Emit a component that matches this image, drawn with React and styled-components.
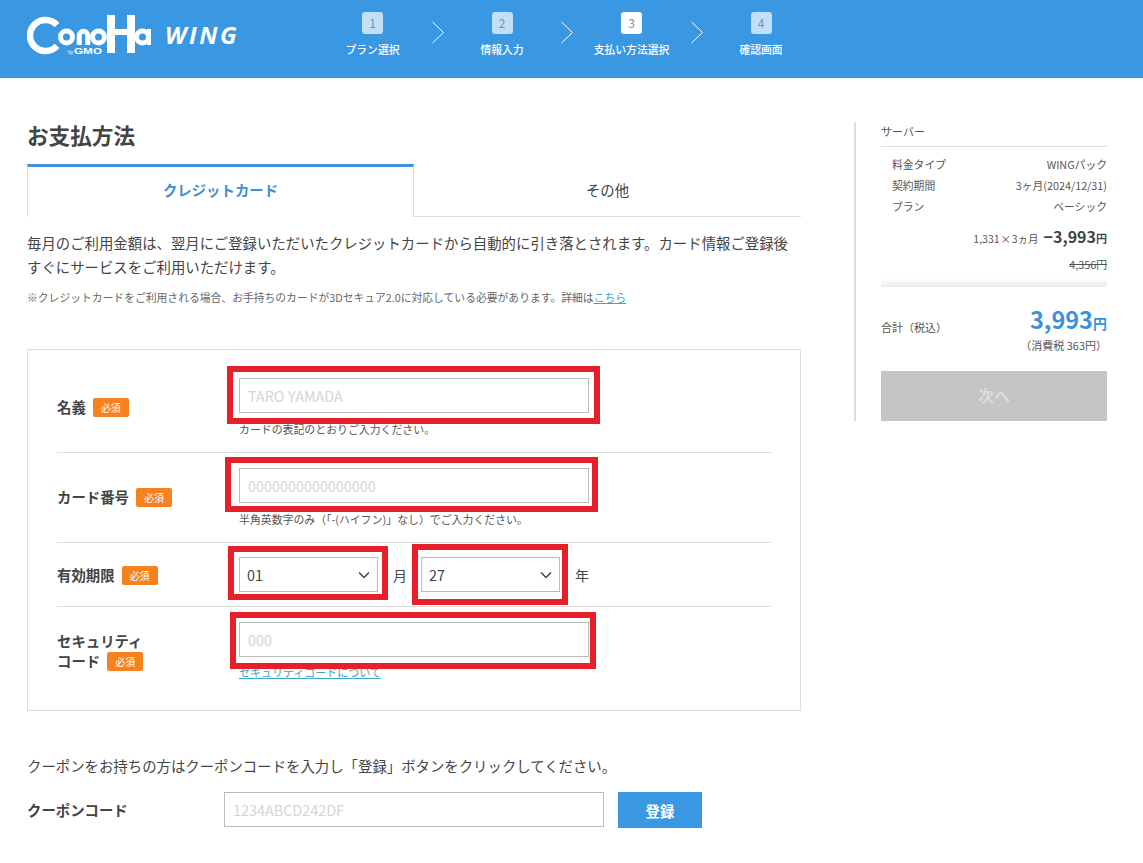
import React from 'react';
import styled, { createGlobalStyle } from 'styled-components';

const Global = createGlobalStyle`
  * { box-sizing: border-box; }
  html, body { margin: 0; padding: 0; background: #fff; }
  body {
    font-family: "Noto Sans CJK JP", "Noto Sans", sans-serif;
    color: #444;
    overflow: hidden;
  }
`;

const Page = styled.div`
  width: 1143px;
  height: 863px;
  overflow: hidden;
`;

const Header = styled.header`
  height: 78px;
  background: #3a97e1;
  display: flex;
  padding-left: 27px;
`;

const Brand = styled.div`
  width: 293.5px;
  display: flex;
  align-items: flex-start;
  padding-top: 15px;
`;

const LogoMark = styled.svg`
  width: 124px;
  height: 40px;
  flex: none;
`;

const BrandName = styled.span`
  margin: 4px 0 0 14px;
  font-family: "Open Sans", sans-serif;
  font-size: 24px;
  line-height: 32px;
  font-weight: 700;
  font-style: italic;
  letter-spacing: 2.6px;
  color: #fff;
`;

const Steps = styled.ol`
  display: flex;
  list-style: none;
  margin: 0;
  padding: 12px 0 0;
`;

const Step = styled.li`
  width: 104px;
  display: flex;
  flex-direction: column;
  align-items: center;
`;

const StepNum = styled.span`
  width: 21px;
  height: 22px;
  border-radius: 3px;
  background: ${(p) => (p.$active ? '#fff' : '#c3dff6')};
  color: #6b94c8;
  font-size: 12px;
  line-height: 22px;
  text-align: center;
`;

const StepLabel = styled.span`
  margin-top: 7px;
  font-size: 10.8px;
  line-height: 16px;
  font-weight: 500;
  color: #fff;
  white-space: nowrap;
`;

const StepArrow = styled.svg`
  width: 25.5px;
  height: 24px;
  margin-top: 9px;
  flex: none;
`;

const Body = styled.div`
  display: flex;
  padding: 44px 0 0 27px;
`;

const Main = styled.main`
  width: 774px;
  flex: none;
`;

const Title = styled.h1`
  margin: 0;
  height: 42px;
  font-size: 21.6px;
  line-height: 26px;
  font-weight: 700;
  color: #444;
`;

const Tabs = styled.div`
  display: flex;
`;

const Tab = styled.div`
  width: 387px;
  height: 53px;
  padding-bottom: 5px;
  display: flex;
  align-items: center;
  justify-content: center;
  font-size: 14.4px;
  font-weight: ${(p) => (p.$active ? 700 : 400)};
  color: ${(p) => (p.$active ? '#3f8fd2' : '#444')};
  border-top: 3px solid ${(p) => (p.$active ? '#3f92d8' : 'transparent')};
  border-left: ${(p) => (p.$active ? '1px solid #ddd' : '0')};
  border-right: ${(p) => (p.$active ? '1px solid #ddd' : '0')};
  border-bottom: ${(p) => (p.$active ? '0' : '1px solid #ddd')};
`;

const Lead = styled.p`
  margin: 14px 0 0;
  font-size: 14.4px;
  line-height: 24px;
  color: #444;
  white-space: nowrap;
`;

const Note = styled.p`
  margin: 9px 0 0;
  font-size: 10.8px;
  line-height: 18px;
  color: #666;
`;

const TextLink = styled.a`
  color: #3aa3c8;
  text-decoration: underline;
`;

const FormBox = styled.section`
  margin-top: 43px;
  height: 362px;
  border: 1px solid #ddd;
  padding: 12px 29px 0;
`;

const Row = styled.div`
  display: grid;
  grid-template-columns: 182px 1fr;
  align-items: center;
  padding: ${(p) => p.$pad || '16px 0'};
  border-bottom: ${(p) => (p.$last ? '0' : '1px solid #ddd')};
`;

const RowLabel = styled.div`
  font-size: 14.4px;
  line-height: 20px;
  font-weight: 700;
  color: #444;
`;

const Badge = styled.span`
  display: inline-block;
  width: 36px;
  height: 19px;
  margin-left: 7px;
  border-radius: 2px;
  background: #f8811f;
  color: #fff;
  font-size: 10px;
  line-height: 19px;
  font-weight: 400;
  text-align: center;
  vertical-align: 1px;
`;

const Field = styled.div`
  position: relative;
  width: ${(p) => p.$width || '350px'};
`;

const TextInput = styled.input`
  display: block;
  width: 100%;
  height: 35px;
  padding: 0 8px;
  border: 1px solid #bbb;
  border-radius: 0;
  outline: none;
  background: #fff;
  font-family: inherit;
  font-size: 14.4px;
  color: #444;
  &::placeholder {
    color: #d4d4d4;
    opacity: 1;
  }
`;

const Hint = styled.p`
  margin: 9px 0 0;
  font-size: 10.9px;
  line-height: 14px;
  color: #555;
  white-space: nowrap;
`;

const HintLink = styled(TextLink)`
  display: block;
  margin-top: 7px;
  font-size: 11px;
  line-height: 16px;
`;

const DateRow = styled.div`
  display: flex;
  align-items: center;
`;

const SelectInput = styled.select`
  display: block;
  width: 100%;
  height: 35px;
  padding: 0 7px;
  appearance: none;
  border: 1px solid #bbb;
  border-radius: 0;
  outline: none;
  background: #fff;
  font-family: inherit;
  font-size: 14.4px;
  color: #444;
`;

const Caret = styled.svg`
  position: absolute;
  right: 8px;
  top: 14px;
  width: 12px;
  height: 8px;
  pointer-events: none;
`;

const DateUnit = styled.span`
  width: 43px;
  padding-left: 15px;
  font-size: 14px;
  line-height: 20px;
  color: #444;
`;

/* Red annotation frames painted over the form fields */
const Mark = styled.div`
  position: absolute;
  top: ${(p) => p.$t}px;
  left: ${(p) => p.$l}px;
  width: ${(p) => p.$w}px;
  height: ${(p) => p.$h}px;
  border: 6px solid #e71f2b;
  pointer-events: none;
`;

const CouponText = styled.p`
  margin: 43px 0 0;
  font-size: 14.4px;
  line-height: 24px;
  color: #444;
`;

const CouponRow = styled.div`
  display: flex;
  align-items: flex-start;
  margin-top: 14px;
`;

const CouponLabel = styled.div`
  width: 197px;
  font-size: 14.4px;
  line-height: 35px;
  font-weight: 700;
  color: #444;
`;

const CouponInput = styled(TextInput)`
  width: 380px;
`;

const CouponButton = styled.button`
  width: 84px;
  height: 36px;
  margin-left: 14px;
  border: 0;
  background: #3a97e1;
  color: #fff;
  font-family: inherit;
  font-size: 14.4px;
  font-weight: 700;
`;

const Aside = styled.aside`
  width: 253px;
  height: 299px;
  margin-left: 53px;
  padding-left: 25px;
  border-left: 2px solid #ddd;
  flex: none;
`;

const AsideTitle = styled.div`
  height: 25px;
  font-size: 11px;
  line-height: 18px;
  color: #555;
  border-bottom: 1px solid #ddd;
`;

const SpecList = styled.dl`
  margin: 7px 0 0;
  padding-left: 11px;
`;

const SpecRow = styled.div`
  display: flex;
  justify-content: space-between;
  font-size: 10.8px;
  line-height: 21px;
  color: #555;
`;

const SpecTerm = styled.dt``;
const SpecValue = styled.dd`
  margin: 0;
`;

const PriceLine = styled.div`
  display: flex;
  justify-content: flex-end;
  align-items: baseline;
  gap: 5px;
  margin-top: 7px;
  font-size: 10.5px;
  line-height: 24px;
  word-spacing: -1.5px;
  color: #555;
`;

const PriceStrong = styled.strong`
  font-size: 16px;
  font-weight: 700;
  color: #444;
`;

const Yen = styled.span`
  font-size: ${(p) => p.$size || 11}px;
  font-weight: 700;
`;

const Struck = styled.div`
  margin-top: 4px;
  text-align: right;
  font-size: 10.8px;
  line-height: 18px;
  color: #555;
  text-decoration: line-through;
`;

const Fade = styled.div`
  height: 9px;
  margin-top: 5px;
  background: linear-gradient(#fff, #ececec);
`;

const TotalRow = styled.div`
  display: flex;
  justify-content: space-between;
  align-items: flex-end;
  margin-top: 14px;
`;

const TotalLabel = styled.span`
  font-size: 11px;
  line-height: 18px;
  color: #555;
  padding-bottom: 5px;
`;

const TotalPrice = styled.span`
  font-size: 23.5px;
  line-height: 36px;
  font-weight: 700;
  color: #3a92da;
`;

const Tax = styled.div`
  margin-top: -5px;
  text-align: right;
  font-size: 11px;
  line-height: 18px;
  color: #555;
`;

const NextButton = styled.button`
  display: block;
  width: 226px;
  height: 50px;
  margin-top: 17px;
  padding: 0 0 2px;
  border: 0;
  background: #c5c5c5;
  color: #dcdcdc;
  font-family: inherit;
  font-size: 16px;
  font-weight: 700;
`;

const Logo = () => (
  <LogoMark viewBox="0 0 124 40" aria-label="ConoHa by GMO">
    <g fill="none" stroke="#fff" strokeWidth="5">
      <path d="M30 10.1 A15.5 15.5 0 1 0 30 30.9" strokeWidth="6.5" />
      <circle cx="39.5" cy="22" r="6" />
      <path d="M52.25 30 V20.5 A4.25 4.25 0 0 1 60.75 20.5 V30" />
      <circle cx="71.5" cy="22" r="6" />
      <circle cx="115.5" cy="22" r="6" />
    </g>
    <g fill="#fff">
      <rect x="80" y="0" width="8" height="38" />
      <rect x="100" y="0" width="8" height="38" />
      <rect x="86" y="14" width="16" height="6" />
      <rect x="120" y="14" width="4" height="16" />
      <text x="41" y="39" fontFamily="Liberation Sans, sans-serif" fontSize="5">by</text>
      <text x="47" y="39" fontFamily="Liberation Sans, sans-serif" fontSize="9" fontWeight="700" textLength="28" lengthAdjust="spacingAndGlyphs">GMO</text>
    </g>
  </LogoMark>
);

const Chevron = () => (
  <StepArrow viewBox="0 0 25.5 24">
    <path d="M7.5 1 L18.5 11.5 L7.5 22" fill="none" stroke="#fff" strokeWidth="1" />
  </StepArrow>
);

const CaretIcon = () => (
  <Caret viewBox="0 0 12 8">
    <path d="M1 1.5 L6 6.5 L11 1.5" fill="none" stroke="#444" strokeWidth="1.5" />
  </Caret>
);

const steps = ['プラン選択', '情報入力', '支払い方法選択', '確認画面'];

export default function App() {
  return (
    <Page>
      <Global />
      <Header>
        <Brand>
          <Logo />
          <BrandName>WING</BrandName>
        </Brand>
        <Steps>
          {steps.map((s, i) => (
            <React.Fragment key={s}>
              <Step>
                <StepNum $active={i === 2}>{i + 1}</StepNum>
                <StepLabel>{s}</StepLabel>
              </Step>
              {i < 3 && <Chevron />}
            </React.Fragment>
          ))}
        </Steps>
      </Header>
      <Body>
        <Main>
          <Title>お支払方法</Title>
          <Tabs>
            <Tab $active>クレジットカード</Tab>
            <Tab>その他</Tab>
          </Tabs>
          <Lead>
            毎月のご利用金額は、翌月にご登録いただいたクレジットカードから自動的に引き落とされます。カード情報ご登録後
            <br />
            すぐにサービスをご利用いただけます。
          </Lead>
          <Note>
            ※クレジットカードをご利用される場合、お手持ちのカードが3Dセキュア2.0に対応している必要があります。詳細は
            <TextLink href="#">こちら</TextLink>
          </Note>
          <FormBox>
            <Row>
              <RowLabel>名義<Badge>必須</Badge></RowLabel>
              <Field>
                <TextInput placeholder="TARO YAMADA" />
                <Mark $t={-12} $l={-12} $w={373} $h={58} />
                <Hint>カードの表記のとおりご入力ください。</Hint>
              </Field>
            </Row>
            <Row $pad="15px 0 16px">
              <RowLabel>カード番号<Badge>必須</Badge></RowLabel>
              <Field>
                <TextInput placeholder="0000000000000000" />
                <Mark $t={-11} $l={-14} $w={373} $h={55} />
                <Hint>半角英数字のみ（「-(ハイフン)」なし）でご入力ください。</Hint>
              </Field>
            </Row>
            <Row $pad="14px 0">
              <RowLabel>有効期限<Badge>必須</Badge></RowLabel>
              <DateRow>
                <Field $width="139px">
                  <SelectInput defaultValue="01"><option>01</option></SelectInput>
                  <CaretIcon />
                  <Mark $t={-11} $l={-11} $w={160} $h={54} />
                </Field>
                <DateUnit>月</DateUnit>
                <Field $width="139px">
                  <SelectInput defaultValue="27"><option>27</option></SelectInput>
                  <CaretIcon />
                  <Mark $t={-13} $l={-9} $w={156} $h={61} />
                </Field>
                <DateUnit>年</DateUnit>
              </DateRow>
            </Row>
            <Row $last $pad="15px 0 16px">
              <RowLabel>セキュリティ<br />コード<Badge>必須</Badge></RowLabel>
              <Field>
                <TextInput placeholder="000" />
                <Mark $t={-10} $l={-9} $w={366} $h={57} />
                <HintLink href="#">セキュリティコードについて</HintLink>
              </Field>
            </Row>
          </FormBox>
          <CouponText>クーポンをお持ちの方はクーポンコードを入力し「登録」ボタンをクリックしてください。</CouponText>
          <CouponRow>
            <CouponLabel>クーポンコード</CouponLabel>
            <CouponInput placeholder="1234ABCD242DF" />
            <CouponButton>登録</CouponButton>
          </CouponRow>
        </Main>
        <Aside>
          <AsideTitle>サーバー</AsideTitle>
          <SpecList>
            <SpecRow><SpecTerm>料金タイプ</SpecTerm><SpecValue>WINGパック</SpecValue></SpecRow>
            <SpecRow><SpecTerm>契約期間</SpecTerm><SpecValue>3ヶ月(2024/12/31)</SpecValue></SpecRow>
            <SpecRow><SpecTerm>プラン</SpecTerm><SpecValue>ベーシック</SpecValue></SpecRow>
          </SpecList>
          <PriceLine>
            1,331 × 3ヵ月
            <PriceStrong>−3,993<Yen>円</Yen></PriceStrong>
          </PriceLine>
          <Struck>4,356円</Struck>
          <Fade />
          <TotalRow>
            <TotalLabel>合計（税込）</TotalLabel>
            <TotalPrice>3,993<Yen $size={14}>円</Yen></TotalPrice>
          </TotalRow>
          <Tax>（消費税 363円）</Tax>
          <NextButton disabled>次へ</NextButton>
        </Aside>
      </Body>
    </Page>
  );
}
